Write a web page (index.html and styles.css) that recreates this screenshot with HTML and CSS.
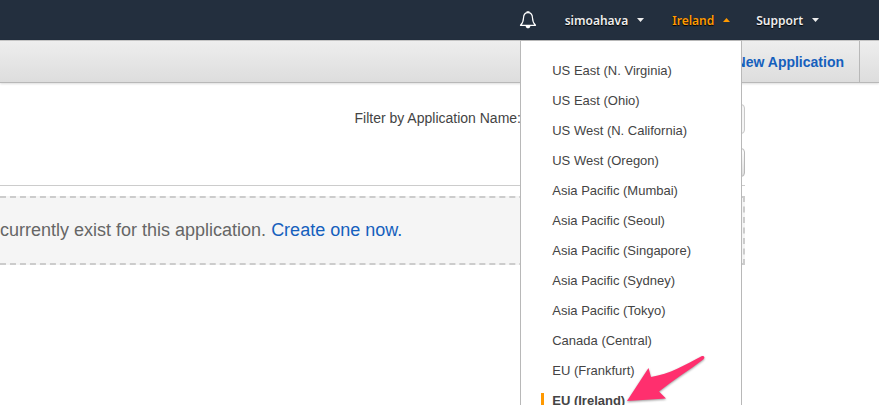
FILE: index.html
```html
<!DOCTYPE html>
<html lang="en">
<head>
<meta charset="utf-8">
<title>Applications</title>
<link rel="stylesheet" href="styles.css">
</head>
<body>
<header class="topnav">
  <button class="nav-button bell" aria-label="Notifications">
    <svg width="18" height="18" viewBox="0 0 18 18" fill="none" stroke="#fff" stroke-width="1.2" stroke-linejoin="round"><path d="M9 1.600C5.800 1.600 4.600 4 4.500 7c-.1 4-1 5.400-3 7.300h15c-2-1.900-2.900-3.300-3-7.300C13.400 4 12.200 1.600 9 1.600Z"/><path d="M8 1.600V.8h2v.8"/><path d="M6.600 15h4.800C11.200 16.800 10.200 17.300 9 17.300S6.800 16.800 6.600 15Z" fill="#fff" stroke="none"/></svg>
  </button>
  <button class="nav-button">simoahava<svg class="caret" width="7" height="4" viewBox="0 0 7 4"><path d="M0 0h7L3.500 4Z"/></svg></button>
  <div class="region">
    <button class="nav-button active" aria-expanded="true">Ireland<svg class="caret" width="7" height="4" viewBox="0 0 7 4"><path d="M0 4h7L3.500 0Z"/></svg></button>
    <ul class="menu">
      <li><a href="#">US East (N. Virginia)</a></li>
      <li><a href="#">US East (Ohio)</a></li>
      <li><a href="#">US West (N. California)</a></li>
      <li><a href="#">US West (Oregon)</a></li>
      <li><a href="#">Asia Pacific (Mumbai)</a></li>
      <li><a href="#">Asia Pacific (Seoul)</a></li>
      <li><a href="#">Asia Pacific (Singapore)</a></li>
      <li><a href="#">Asia Pacific (Sydney)</a></li>
      <li><a href="#">Asia Pacific (Tokyo)</a></li>
      <li><a href="#">Canada (Central)</a></li>
      <li><a href="#">EU (Frankfurt)</a></li>
      <li class="selected"><a href="#">EU (Ireland)</a>
        <svg class="pointer" width="82" height="50" viewBox="0 0 82 50"><path d="M2 46 23.500 13 26 22C45 19 60 10 76.500 1.300 78.800.4 80.500 2.500 78.500 4.200 64 15.500 48 25 34 36.500L41 43.500Z"/></svg>
      </li>
    </ul>
  </div>
  <button class="nav-button">Support<svg class="caret" width="7" height="4" viewBox="0 0 7 4"><path d="M0 0h7L3.500 4Z"/></svg></button>
</header>
<nav class="toolbar"><a href="#">Create New Application</a></nav>
<main>
  <form class="filter">
    <label for="filter">Filter by Application Name:</label>
    <input id="filter" type="text">
    <button class="refresh" type="button" aria-label="Refresh"></button>
  </form>
  <p class="empty">currently exist for this application. <a href="#">Create one now.</a></p>
</main>
</body>
</html>
```
FILE: styles.css
```css
* { box-sizing: border-box; }
body {
  margin: 0;
  min-height: 100vh;
  overflow: hidden;
  background: #fff;
  color: #444;
  font-family: "Liberation Sans", Arial, sans-serif;
  font-size: 14px;
}
a { color: #1560bd; text-decoration: none; }

.topnav {
  display: flex;
  justify-content: flex-end;
  height: 40px;
  padding-right: 46px;
  background: #232f3e;
}
.nav-button {
  display: flex;
  align-items: center;
  gap: 9px;
  height: 40px;
  padding: 0 14px;
  border: 0;
  background: none;
  color: #eee;
  font: 600 12px "Noto Sans", sans-serif;
  text-shadow: 0 1px 1px #000;
}
.active { color: #ff9900; padding-right: 12px; }
.caret { fill: currentColor; }

.region { position: relative; }
.menu {
  position: absolute;
  z-index: 2;
  top: 40px;
  right: 0;
  width: 222px;
  margin: 0;
  padding: 15px 20px;
  border: 1px solid #b8b8b8;
  background: #fff;
  list-style: none;
  font-size: 13px;
  line-height: 30px;
}
.menu li { position: relative; display: flex; align-items: center; height: 30px; }
.menu a {
  padding-left: 11px;
  color: #444;
}
.menu .selected a {
  border-left: 3px solid #ff9900;
  padding-left: 8px;
  font-weight: bold;
  line-height: 16px;
}
.pointer {
  position: absolute;
  left: 84px;
  bottom: 11px;
  fill: #ff2f6e;
  filter: drop-shadow(0 1px 1px #0006);
}

.toolbar {
  display: flex;
  justify-content: flex-end;
  height: 43px;
  padding-right: 19px;
  border-top: 1px solid #c4c4c4;
  border-bottom: 1px solid #b8b8b8;
  background: linear-gradient(#eee, #ddd);
  box-shadow: 0 1px 2px #0002;
  line-height: 42px;
}
.toolbar a {
  padding-right: 15px;
  border-right: 1px solid #b8b8b8;
  font-weight: bold;
}

main { margin-right: 134px; padding-top: 21px; }
.filter {
  display: grid;
  grid-template-columns: 1fr 220px;
  column-gap: 4px;
  row-gap: 14px;
  padding-bottom: 8px;
  border-bottom: 1px solid #ccc;
}
.filter label { text-align: right; line-height: 28px; }
.filter input {
  height: 30px;
  border: 1px solid #c8c8c8;
  border-radius: 4px;
  background: #f5f5f5;
}
.refresh {
  grid-column: 2;
  justify-self: end;
  width: 36px;
  height: 29px;
  border: 1px solid #b8b8b8;
  border-radius: 4px;
  background: linear-gradient(#fff, #ddd);
}
.empty {
  margin: 10px 0 0;
  border: 2px dashed #ccc;
  border-left: 0;
  background: #f5f5f5;
  color: #666;
  font-size: 18px;
  line-height: 65px;
}
```
